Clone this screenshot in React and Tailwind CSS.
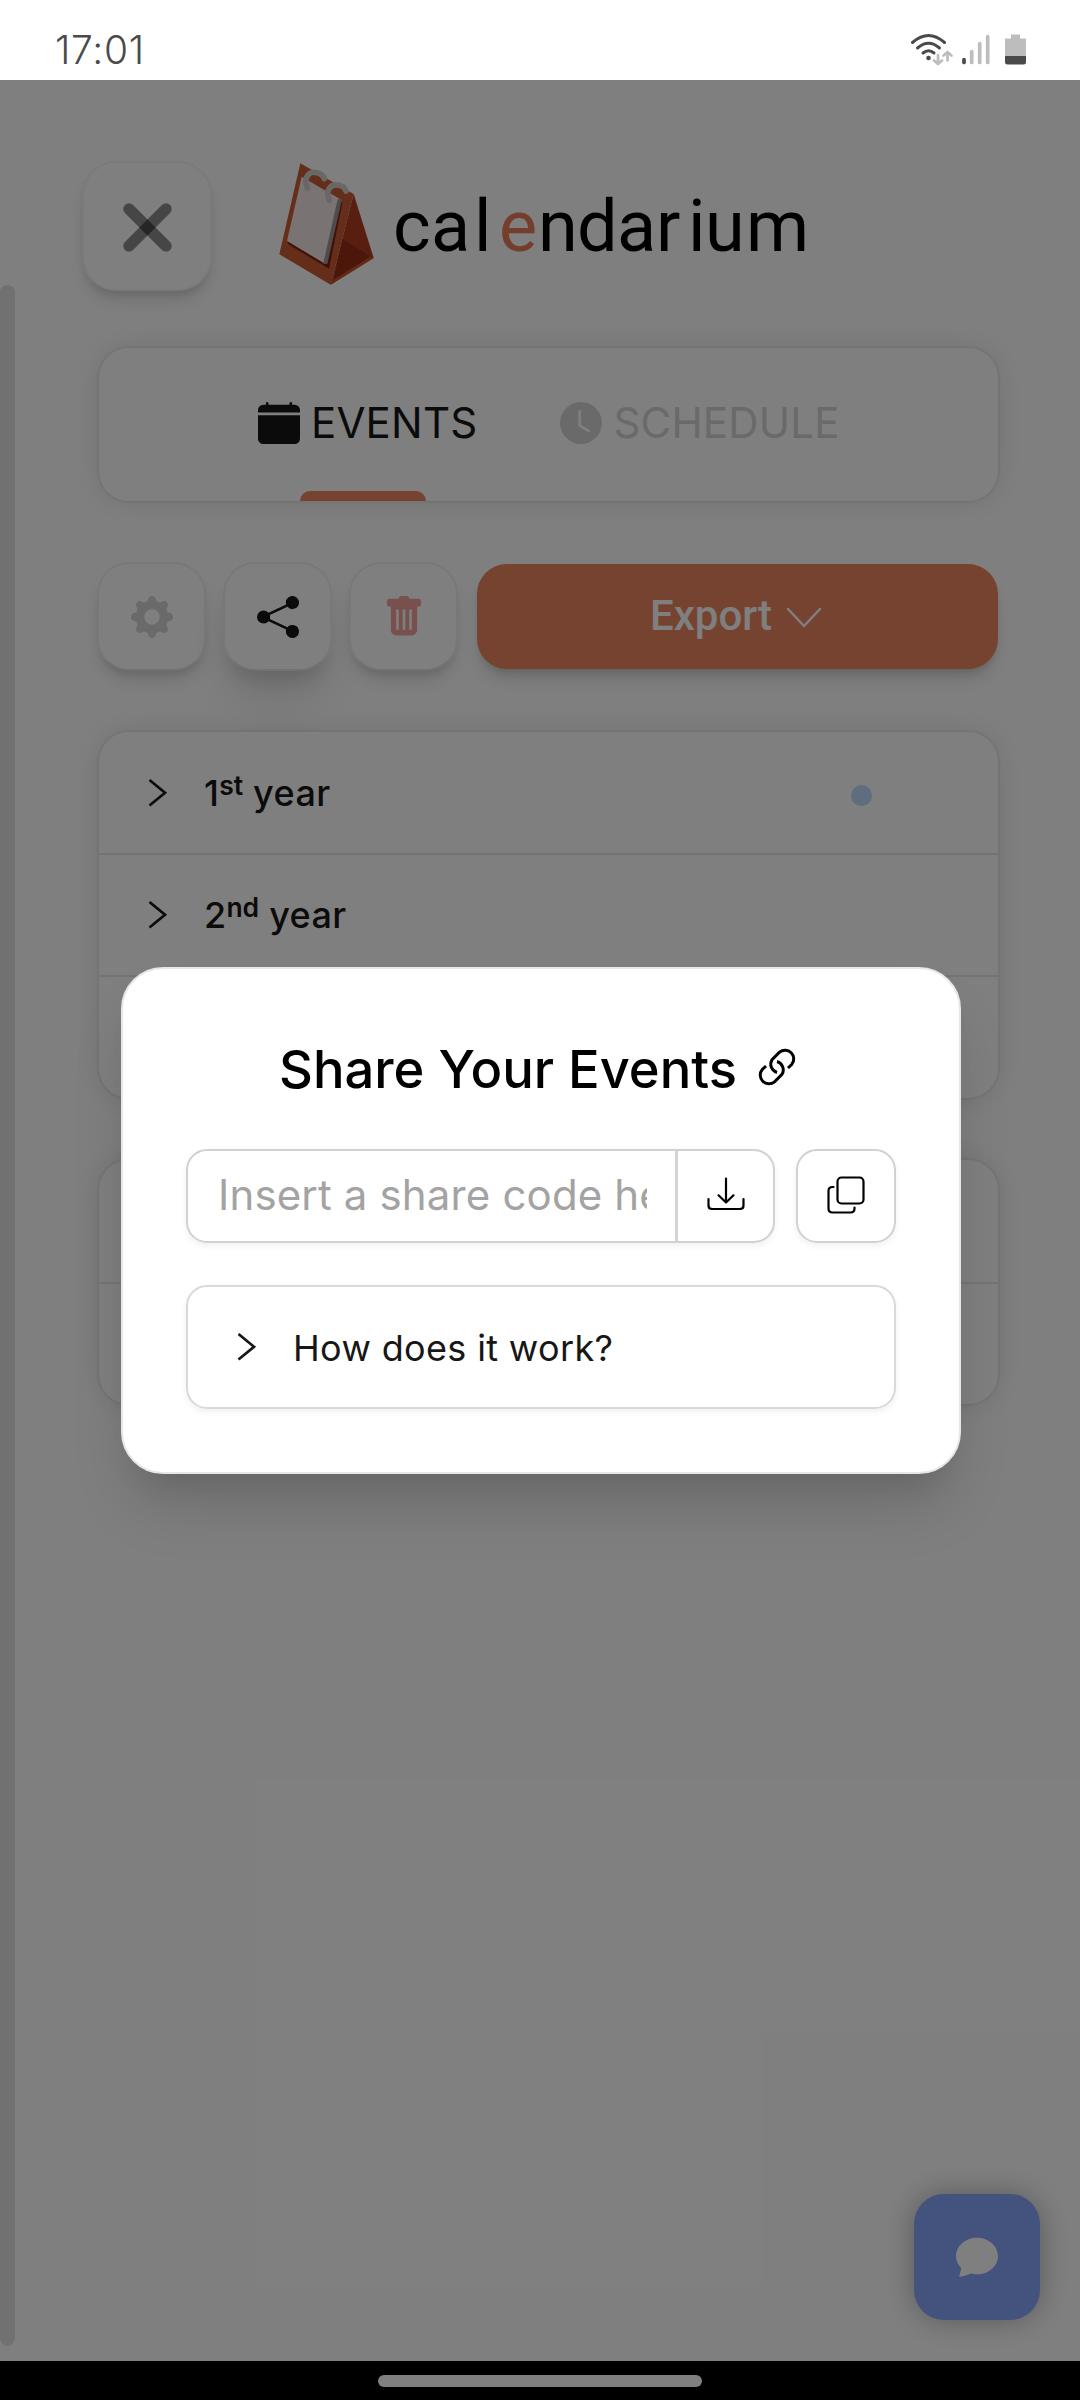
import React from "react";
import {
  BsCalendarFill,
  BsClockFill,
  BsGearFill,
  BsShareFill,
  BsTrashFill,
  BsChatFill,
} from "react-icons/bs";

const LETTERS = [
  ["c", 38], ["a", 43], ["l", 25], ["e", 39], ["n", 39], ["d", 40],
  ["a", 39], ["r", 32], ["i", 17], ["u", 41], ["m", 56],
];

function StatusBar() {
  return (
    <div className="flex h-20 items-center justify-between bg-white pt-5 pr-[54px] pl-[55px]">
      <span className="mb-[1px] text-[39px] leading-none font-light tracking-[0.7px] text-[#4a4a4a]">17:01</span>
      <svg width="120" height="34" viewBox="0 0 120 34" fill="none" strokeLinecap="round" className="mb-[2px]">
        <g stroke="#4a4a4a" strokeWidth="3">
          <path d="M6.500 10.500Q22.500 -3.500 38.500 10.500" />
          <path d="M11.500 16Q22.500 6.500 33.500 16" />
          <path d="M17 21Q22.500 16.500 28 21" />
        </g>
        <circle cx="22.500" cy="26" r="2.300" fill="#4a4a4a" />
        <g stroke="#bdbdbd" strokeWidth="2.700">
          <path d="M32 23V32M28 28.500L32 32L36 28.500" />
          <path d="M41.500 28.500V20M37.500 23.500L41.500 20L45.500 23.500" />
        </g>
        <path d="M58 27.500V30.500" stroke="#4a4a4a" strokeWidth="3.700" />
        <path d="M65.700 19.500V30.500M73.700 11.500V30.500M81.700 4.500V30.500" stroke="#bdbdbd" strokeWidth="3.700" />
        <path d="M105 2.500H114V6.500H120V24H99V6.500H105Z" fill="#bdbdbd" />
        <path d="M99 24H120V30Q120 32.500 117.500 32.500H101.500Q99 32.500 99 30Z" fill="#4a4a4a" />
      </svg>
    </div>
  );
}

function CalendarLogo() {
  return (
    <svg width="96" height="124" viewBox="56 69 288 372" className="mt-[2px]">
      <polygon points="280,162 211,434 340,354" fill="#b03e22" />
      <polygon points="246,297 220,420 332,351" fill="#982c14" />
      <polygon points="120,70 57,343 211,434 280,162" fill="#ca5c34" />
      <polygon points="211,434 340,354 330,350 222,418" fill="#c4562f" />
      <polygon points="80,303 84,313 206,386 246,190 240,180" fill="#7e2010" />
      <polygon points="124,110 80,303 195,372 240,178" fill="#f2e6e8" />
      <polygon points="232,178 189,370 201,372 245,178" fill="#9e9698" />
      <path d="M141 145C128 112 146 92 170 98Q186 101 192 116" fill="none" stroke="#d2d0cf" strokeWidth="17" strokeLinecap="round" />
      <path d="M207 181C193 150 212 130 236 136Q252 139 257 153" fill="none" stroke="#d2d0cf" strokeWidth="17" strokeLinecap="round" />
    </svg>
  );
}

function Wordmark() {
  return (
    <div className="mt-[24px] ml-[18px] flex font-[Roboto,sans-serif] text-[72px] leading-[84px] text-black">
      {LETTERS.map(([ch, w], i) => (
        <span key={i} className={ch === "e" ? "text-[#ea7c58]" : ""} style={{ width: w }}>{ch}</span>
      ))}
    </div>
  );
}

function Chevron({ className }) {
  return (
    <svg width="20" height="28" viewBox="0 0 20 28" fill="none" stroke="currentColor" strokeWidth="2.700" className={className}>
      <path d="M1.500 1L17 13.800L1.500 26.500" />
    </svg>
  );
}

function SquareButton({ children, className }) {
  return (
    <button className={"flex size-[109px] items-center justify-center rounded-[32px] border-2 border-[#f0f0f0] border-b-[#e4e4e4] bg-white " + className}>
      {children}
    </button>
  );
}

function Row({ n, suffix, dot, className }) {
  return (
    <div className={"flex items-center pl-[49px] pr-[126px] " + className}>
      <Chevron className="mr-9 text-[#171717]" />
      {n && (
        <div className="flex text-[36px] leading-[44px] font-medium tracking-[0.2px] text-[#171717]">
          <span>{n}</span>
          <span className="-mt-[8px] text-[26.500px] font-semibold tracking-normal">{suffix}</span>
          <span className="ml-[10px] tracking-[0.4px]">year</span>
        </div>
      )}
      {dot && <span className="ml-auto size-[21px] rounded-full bg-[#bfdbfe] mt-[5px]" />}
    </div>
  );
}

const CARD = "w-[899px] overflow-hidden rounded-[30px] bg-white shadow-[0_0_2px_2px_rgba(0,0,0,0.05),0_0_30px_rgba(0,0,0,0.11)]";
const DIVIDED = "border-b-2 border-[#e8e8e8]";

function Page() {
  return (
    <main className="relative h-[2281px] overflow-hidden bg-white pl-[99px]">
      <div className="absolute top-[205px] left-0 h-[2061px] w-[15px] rounded-[8px] bg-[#e2e2e2]" />

      <header className="-ml-[17px] flex h-[208px] items-center pt-[81px]">
        <button className="flex size-[130px] items-center justify-center self-start rounded-[34px] border-2 border-[#f4f4f4] bg-white shadow-[0_12px_18px_-3px_rgba(0,0,0,0.12),0_6px_8px_-4px_rgba(0,0,0,0.12)]">
          <svg width="54" height="54" viewBox="0 0 54 54" stroke="#000" strokeOpacity=".45" strokeWidth="11.500" strokeLinecap="round" className="mt-[2px]">
            <path d="M9 9L46 46" />
            <path d="M46 9L9 46" />
          </svg>
        </button>
        <div className="ml-[67px] flex items-start self-start">
          <CalendarLogo />
          <Wordmark />
        </div>
      </header>

      <nav className={"mt-[60px] h-[153px] " + CARD}>
        <div className="flex h-[143px] items-center pt-[6px] text-[42px] leading-[50px] tracking-[0.2px]">
          <div className="ml-[159px] flex items-center text-[#171717]">
            <BsCalendarFill size={42} />
            <span className="mt-[1px] ml-[11px]">EVENTS</span>
          </div>
          <div className="ml-[83px] flex items-center text-[#d4d4d4]">
            <BsClockFill size={42} />
            <span className="mt-[1px] ml-[11px]">SCHEDULE</span>
          </div>
        </div>
        <div className="ml-[201px] h-[10px] w-[126px] rounded-t-[10px] bg-[#ea865e]" />
      </nav>

      <div className="-ml-[2px] mt-[61px] flex gap-[17px]">
        <SquareButton className="text-[#d4d4d4] shadow-[0_12px_18px_-3px_rgba(0,0,0,0.12),0_6px_8px_-4px_rgba(0,0,0,0.12)]"><BsGearFill size={42} /></SquareButton>
        <SquareButton className="text-[#171717] shadow-[0_30px_45px_-6px_rgba(0,0,0,0.12),0_14px_20px_-8px_rgba(0,0,0,0.14)]"><BsShareFill size={42} /></SquareButton>
        <SquareButton className="text-[#f0a29e] shadow-[0_12px_18px_-3px_rgba(0,0,0,0.12),0_6px_8px_-4px_rgba(0,0,0,0.12)]"><BsTrashFill size={42} /></SquareButton>
        <button className="mt-[2px] ml-[2px] flex h-[105px] w-[521px] items-center justify-center rounded-[30px] bg-[#ea865e] pr-[3px] pb-[1px] font-[Roboto,sans-serif] text-[42px] leading-[50px] font-medium text-white shadow-[0_12px_18px_-3px_rgba(0,0,0,0.14),0_6px_8px_-4px_rgba(0,0,0,0.14)]">
          <span>Export</span>
          <svg width="36" height="22" viewBox="0 0 36 22" fill="none" stroke="currentColor" strokeWidth="2.500" strokeLinecap="round" strokeLinejoin="round" className="mt-[4px] ml-[14px]">
            <path d="M2 2L18 19L34 2" />
          </svg>
        </button>
      </div>

      <section className={"mt-[61px] h-[366px] " + CARD}>
        <Row n="1" suffix="st" dot className={"h-[123px] " + DIVIDED} />
        <Row n="2" suffix="nd" className={"h-[122px] " + DIVIDED} />
        <Row className="h-[121px]" />
      </section>
      <section className={"mt-[62px] h-[244px] " + CARD}>
        <Row className={"h-[124px] " + DIVIDED} />
        <Row className="h-[120px]" />
      </section>

      <button className="absolute right-[40px] bottom-[41px] flex size-[126px] items-center justify-center rounded-[30px] bg-[#86a6fc] pb-[2px] text-white shadow-[0_0_30px_rgba(0,0,0,0.3)]">
        <BsChatFill size={42} />
      </button>
    </main>
  );
}

function LinkIcon() {
  return (
    <svg width="38" height="38" viewBox="0 0 38 38" fill="none" stroke="black" strokeWidth="3" className="ml-[21px] mb-[4px]">
      <path d="M8 18L4.300 21.500A8.700 8.700 0 0 0 16.500 33.800L24 26.300A8.700 8.700 0 0 0 19 13.500" />
      <path d="M30 20L33.700 16.500A8.700 8.700 0 0 0 21.500 4.200L14 11.700A8.700 8.700 0 0 0 19 24.500" />
    </svg>
  );
}

function ShareDialog() {
  return (
    <div className="absolute top-[967px] left-[121px] h-[507px] w-[840px] rounded-[42px] border-2 border-[#e5e7eb] bg-white px-[63px] shadow-[0_40px_60px_-9px_rgba(0,0,0,0.14),0_24px_30px_-18px_rgba(0,0,0,0.1)]">
      <h2 className="mt-[68px] flex h-[64px] items-center pl-[93px] text-[52.500px] font-medium text-black">
        <span className="whitespace-nowrap">Share Your Events</span>
        <LinkIcon />
      </h2>
      <div className="mt-[48px] flex gap-[21px]">
        <div className="flex h-[94px] w-[589px] rounded-[21px] border-[2.500px] border-[#d1d1d1] shadow-[0_3px_6px_rgba(0,0,0,0.06)]">
          <div className="w-[490px] border-r-[3px] border-[#d4d4d4] pr-[28px] pl-[30px]">
            <div className="overflow-hidden text-[42px] leading-[88px] tracking-[0.150px] whitespace-nowrap text-[#a3a3a3]">Insert a share code here</div>
          </div>
          <div className="flex flex-1 items-center justify-center">
            <svg width="38" height="34" viewBox="0 0 38 34" fill="none" stroke="black" strokeWidth="2.200" strokeLinecap="round" strokeLinejoin="round" className="mb-[4px]">
              <path d="M19 1.500V25.500M11.500 18.300L19 25.500L26.500 18.300M1.500 22V28.500Q1.500 32 5 32H33Q36.500 32 36.500 28.500V22" />
            </svg>
          </div>
        </div>
        <button className="flex h-[94px] w-[100px] items-center justify-center rounded-[21px] border-[2.500px] border-[#d1d1d1] shadow-[0_3px_6px_rgba(0,0,0,0.06)]">
          <svg width="38" height="38" viewBox="0 0 38 38" fill="none" stroke="black" strokeWidth="2.200" strokeLinecap="round" className="mb-[3px]">
            <rect x="10.500" y="1.500" width="26" height="26" rx="4" />
            <path d="M6.500 11H5.500Q1.500 11 1.500 15V32.500Q1.500 36.500 5.500 36.500H23.500Q27.500 36.500 27.500 32.500V31.500" />
          </svg>
        </button>
      </div>
      <div className="mt-[42px] flex h-[124px] w-[710px] items-center rounded-[21px] border-2 border-[#d9d9d9] pl-[49px] text-[#171717] shadow-[0_3px_6px_rgba(0,0,0,0.06)]">
        <Chevron />
        <span className="mt-[2px] ml-[36px] text-[36px] leading-[44px] tracking-[0.350px]">How does it work?</span>
      </div>
    </div>
  );
}

export default function App() {
  return (
    <div className="relative h-[2400px] w-[1080px] overflow-hidden bg-white font-[Inter,sans-serif]">
      <StatusBar />
      <Page />
      <div className="flex h-[39px] items-center justify-center bg-black pt-0">
        <div className="h-3 w-[324px] rounded-full bg-[#808080]" />
      </div>
      <div className="absolute top-[80px] left-0 h-[2281px] w-full bg-black/50" />
      <ShareDialog />
    </div>
  );
}
